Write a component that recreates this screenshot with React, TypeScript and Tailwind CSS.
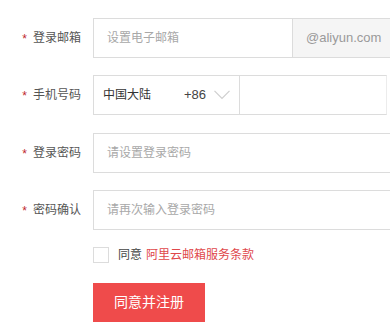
import React from "react";

const font = { fontFamily: '"Liberation Sans", "Noto Sans CJK SC", sans-serif' };

function Label({ text }: { text: string }) {
  return (
    <div className="w-[93px] shrink-0 flex items-center justify-end pr-[12px] text-[12px] text-[#555]">
      <span className="text-[#c0282d] mr-[6px] text-[12px] leading-none translate-y-[1px]">*</span>
      <span>{text}</span>
    </div>
  );
}

export default function App() {
  return (
    <div className="w-[390px] h-[326px] bg-white overflow-hidden relative" style={font}>
      <div className="pt-[18px] flex flex-col">
        {/* email */}
        <div className="flex h-[40px]">
          <Label text="登录邮箱" />
          <div className="flex-1 flex border border-[#dcdcdc] border-r-0 min-w-0">
            <div className="w-[198px] shrink-0 flex items-center pl-[13px] text-[12px] text-[#a8a8a8]">设置电子邮箱</div>
            <div className="flex-1 bg-[#f5f5f5] border-l border-[#dcdcdc] flex items-center pl-[13px] text-[13px] text-[#9a9a9a]">@aliyun.com</div>
          </div>
        </div>
        {/* phone */}
        <div className="flex h-[40px] mt-[17px]">
          <Label text="手机号码" />
          <div className="w-[294px] shrink-0 flex border border-[#dcdcdc] border-r-[#ececec]">
            <div className="w-[146px] shrink-0 flex items-center border-r border-[#dcdcdc] text-[12px] text-[#333]">
              <span className="pl-[9px] w-[90px]">中国大陆</span>
              <span className="text-[13px] text-[#444]">+86</span>
              <svg className="ml-[8px]" width="16" height="10" viewBox="0 0 16 10" fill="none">
                <path d="M0.5 0.8 L8 8.5 L15.5 0.8" stroke="#cfcfcf" strokeWidth="1.2" />
              </svg>
            </div>
            <div className="flex-1" />
          </div>
        </div>
        {/* password */}
        <div className="flex h-[40px] mt-[18px]">
          <Label text="登录密码" />
          <div className="flex-1 flex items-center border border-[#dcdcdc] border-r-0 pl-[13px] text-[12px] text-[#a8a8a8]">请设置登录密码</div>
        </div>
        {/* confirm */}
        <div className="flex h-[40px] mt-[17px]">
          <Label text="密码确认" />
          <div className="flex-1 flex items-center border border-[#dcdcdc] border-r-0 pl-[13px] text-[12px] text-[#a8a8a8]">请再次输入登录密码</div>
        </div>
        {/* agree */}
        <div className="flex items-center mt-[17px] pl-[93px] h-[16px]">
          <div className="w-[16px] h-[16px] border border-[#dcdcdc] bg-white" />
          <span className="ml-[9px] text-[12px] text-[#444]">同意</span>
          <span className="ml-[4px] text-[12px] text-[#e0484b]">阿里云邮箱服务条款</span>
        </div>
        {/* button */}
        <div className="pl-[93px] mt-[20px]">
          <div className="w-[112px] h-[39px] bg-[#ef4b4b] flex items-center justify-center text-[14px] text-white">同意并注册</div>
        </div>
      </div>
    </div>
  );
}
